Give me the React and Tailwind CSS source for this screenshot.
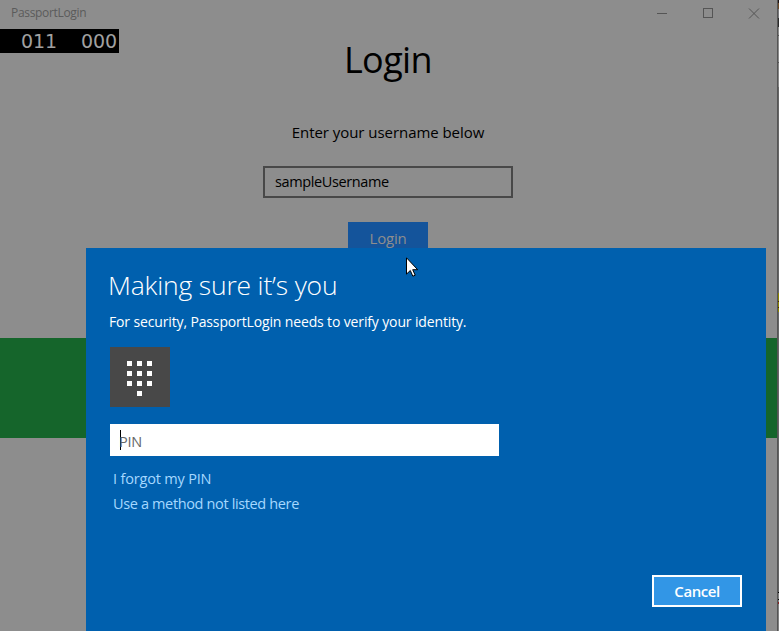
const edgeMarks = [
  { h: 3, c: "bg-[#1c1010]" },
  { h: 6, c: "bg-[#6b4a28]" },
  { h: 9, c: "bg-[#77777a]" },
  { h: 9, c: "bg-[#2a2a2a]" },
  { h: 8, c: "bg-[#8a8a8a]" },
  { h: 1, c: "bg-[#555555]" },
  { h: 26, c: "bg-[#8a8a8a]" },
  { h: 1, c: "bg-[#555555]" },
  { h: 24, c: "bg-[#858585]" },
  { h: 206, c: "bg-[#666666]" },
  { h: 8, c: "bg-[#8a8400]" },
  { h: 1, c: "bg-[#4a2000]" },
  { h: 5, c: "bg-[#8a8400]" },
  { h: 1, c: "bg-[#4a2000]" },
  { h: 4, c: "bg-[#8a8400]" },
  { h: 280, c: "bg-[#666666]" },
  { h: 1, c: "bg-black" },
  { h: 6, c: "bg-[#808080]" },
  { h: 1, c: "bg-black" },
  { h: 2, c: "bg-[#808080]" },
  { h: 2, c: "bg-[#8a2020]" },
  { h: 27, c: "bg-[#808080]" },
];

function TitleBar() {
  return (
    <header className="flex h-[29px] shrink-0 items-start justify-between pl-[11px]">
      <span className="mt-[5px] whitespace-nowrap text-xs leading-4 tracking-[-0.32px] text-[#5b5b5b]">PassportLogin</span>
      <svg className="h-[29px] w-[138px]" fill="none" stroke="#555555" shapeRendering="crispEdges">
        <path d="M18 13.5h10M64.500 8.500h9v9h-9z" />
        <path d="M110 8.500l10 10M120 8.500l-10 10" shapeRendering="auto" />
      </svg>
    </header>
  );
}

function FrameCounter() {
  return (
    <div className="flex h-6 w-[119px] shrink-0 items-center gap-6 bg-black pl-[21px] text-[19px] leading-6 tracking-[-0.08px] text-[#a0a0a0]" style={{ fontFamily: '"DejaVu Sans", sans-serif' }}>
      <span>011</span>
      <span>000</span>
    </div>
  );
}

function LoginPage() {
  return (
    <main className="flex flex-col items-center pr-px text-black">
      <h1 className="-mt-[17px] h-12 text-4xl leading-[48px] tracking-[-0.6px]">Login</h1>
      <p className="mt-[38px] h-5 whitespace-nowrap text-[15px] leading-5 tracking-[-0.05px]">Enter your username below</p>
      <div className="mt-6 flex h-8 w-[250px] items-center border-2 border-[#484848] pb-px pl-[10px] text-[14.5px] tracking-[-0.38px]">sampleUsername</div>
      <button className="mt-6 h-8 w-20 bg-[#14549b] text-[15px] tracking-[-0.2px] text-[#8e8e8e]">Login</button>
    </main>
  );
}

function Keypad() {
  return (
    <div className="mt-[15px] flex size-[60px] items-start justify-center bg-[#484848] pr-px pt-[14px]">
      <div className="grid grid-cols-3 gap-[5px]">
        {[0, 1, 2, 3, 4, 5, 6, 7, 8].map((n) => (
          <i key={n} className="size-[5px] bg-white" />
        ))}
        <i className="col-start-2 size-[5px] bg-white" />
      </div>
    </div>
  );
}

function PinDialog() {
  return (
    <section className="absolute left-[86px] top-[248px] flex h-[383px] w-[680px] flex-col bg-[#0060ae] pl-6 pr-6 text-white">
      <h2 className="-ml-0.5 mt-[19px] h-9 whitespace-nowrap text-[26.5px] font-[350] leading-9 tracking-[-0.18px]">Making sure it’s you</h2>
      <p className="-ml-px mt-[9px] h-5 whitespace-nowrap text-[14px] leading-5 tracking-[-0.14px]">For security, PassportLogin needs to verify your identity.</p>
      <Keypad />
      <div className="mt-[17px] flex h-8 w-[389px] items-center bg-white pl-[10px]">
        <i className="h-5 w-px bg-black" />
        <span className="-ml-0.5 mt-[3px] text-[14.500px] leading-5 tracking-[-0.2px] text-[#666666]">PIN</span>
      </div>
      <a className="ml-[3px] mt-[13px] h-5 whitespace-nowrap text-[14.5px] leading-5 tracking-[-0.18px] text-[#a6d8ff]">I forgot my PIN</a>
      <a className="ml-[3px] mt-[5px] h-5 whitespace-nowrap text-[14.5px] leading-5 tracking-[-0.36px] text-[#a6d8ff]">Use a method not listed here</a>
      <button className="mb-6 mt-auto h-8 w-[90px] self-end border-2 border-white bg-[#3296e6] text-[15px] font-semibold tracking-[-0.45px]">Cancel</button>
    </section>
  );
}

export default function App() {
  return (
    <div className="relative flex h-[631px] w-[779px] overflow-hidden bg-[#8d8d8d]" style={{ fontFamily: '"Open Sans", "Noto Sans", sans-serif' }}>
      <div className="flex w-[777px] flex-col">
        <TitleBar />
        <FrameCounter />
        <LoginPage />
        <div className="mt-[84px] h-[100px] shrink-0 bg-[#15652b]" />
      </div>
      <div className="flex w-[2px] flex-col border-l border-[#555555]">
        {edgeMarks.map((m, i) => (
          <i key={i} className={"shrink-0 " + m.c} style={{ height: m.h }} />
        ))}
      </div>
      <PinDialog />
      <svg className="absolute left-[406px] top-[257px] h-5 w-3" viewBox="0 0 12 20">
        <path d="M.5.8v16.300l3.800-3.600 2.500 5.700 2.400-1-2.500-5.500h5z" fill="white" stroke="black" />
      </svg>
    </div>
  );
}
